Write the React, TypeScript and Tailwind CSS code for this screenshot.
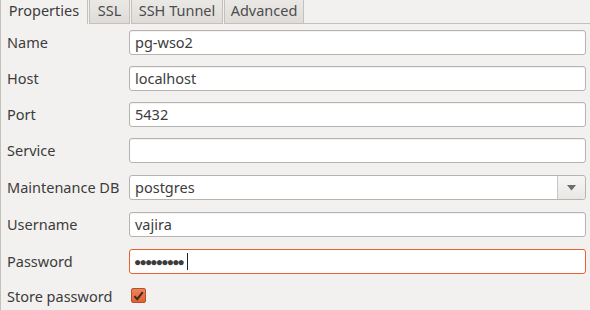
const tabs = ['Properties', 'SSL', 'SSH Tunnel', 'Advanced'];

function TextField({ value, mt }: { value: string; mt: string }) {
  return (
    <div className={`${mt} h-[25px] flex items-center rounded-[3px] border border-[#b6b3b0] bg-white px-[5px] text-[14.5px] text-[#3c3c3c] shadow-[inset_0_1px_1px_rgba(0,0,0,0.06)]`}>
      {value}
    </div>
  );
}

export default function App() {
  const labelCls = 'h-[25px] flex items-center text-[14.5px] text-[#3c3c3c]';

  return (
    <div className="w-[590px] h-[310px] bg-[#f2f1f0] overflow-hidden" style={{ fontFamily: '"Noto Sans", "Open Sans", sans-serif' }}>
      {/* tab strip */}
      <div className="flex h-[24px] items-start">
        <div className="h-[24px] w-[88px] flex justify-center border-l border-r border-[#c4c1bd] bg-[#f2f1f0] text-[14.5px] text-[#3c3c3c]">
          Properties
        </div>
        {tabs.slice(1).map((t, i) => (
          <div
            key={t}
            className={`h-[24px] flex justify-center ml-[1px] border-l border-r border-b border-[#c4c1bd] bg-gradient-to-b from-[#ebe9e6] to-[#dedbd8] text-[14.5px] text-[#4c4c4c] ${
              i === 0 ? 'w-[41px]' : i === 1 ? 'w-[92px]' : 'w-[80px]'
            }`}
          >
            {t}
          </div>
        ))}
        <div className="flex-1 h-[24px] border-b border-[#c4c1bd]" />
      </div>

      {/* body */}
      <div className="flex border-l border-[#c4c1bd] h-[286px]">
        <div className="w-[128px] pl-[6px] pt-[6px] flex flex-col">
          <div className={labelCls}>Name</div>
          <div className={`mt-[11px] ${labelCls}`}>Host</div>
          <div className={`mt-[11px] ${labelCls}`}>Port</div>
          <div className={`mt-[11px] ${labelCls}`}>Service</div>
          <div className={`mt-[12px] ${labelCls}`}>Maintenance DB</div>
          <div className={`mt-[12px] ${labelCls}`}>Username</div>
          <div className={`mt-[12px] ${labelCls}`}>Password</div>
          <div className={`mt-[10px] ${labelCls}`}>Store password</div>
        </div>
        <div className="w-[457px] pt-[6px] flex flex-col">
          <TextField value="pg-wso2" mt="" />
          <TextField value="localhost" mt="mt-[11px]" />
          <TextField value="5432" mt="mt-[11px]" />
          <TextField value="" mt="mt-[11px]" />
          <div className="mt-[12px] h-[25px] flex rounded-[3px] border border-[#b6b3b0] bg-white text-[14.5px] text-[#3c3c3c]">
            <div className="flex-1 flex items-center px-[5px]">postgres</div>
            <div className="w-[28px] flex items-center justify-center border-l border-[#c9c6c2] bg-gradient-to-b from-[#f7f6f5] to-[#e9e7e4] rounded-r-[3px]">
              <svg width="9" height="6" viewBox="0 0 9 6"><path d="M0 0h9L4.5 5.5z" fill="#6e6c69" /></svg>
            </div>
          </div>
          <TextField value="vajira" mt="mt-[12px]" />
          <div className="mt-[12px] h-[25px] flex items-center rounded-[3px] border border-[#e9612f] bg-white px-[4px] text-[#3c3c3c]">
            <span className="text-[12px] tracking-[-1.8px] leading-none">●●●●●●●●●</span>
            <span className="ml-[4px] w-px h-[17px] bg-[#222]" />
          </div>
          <div className="mt-[14px] ml-[2px] w-[15px] h-[15px] rounded-[2px] border border-[#b5502b] bg-gradient-to-b from-[#f0835a] to-[#e0622f] flex items-center justify-center">
            <svg width="11" height="10" viewBox="0 0 11 10">
              <path d="M1.5 5.2L4.2 8.2L9.8 1.2" fill="none" stroke="#3a2a24" strokeWidth="2" />
            </svg>
          </div>
        </div>
      </div>
    </div>
  );
}
